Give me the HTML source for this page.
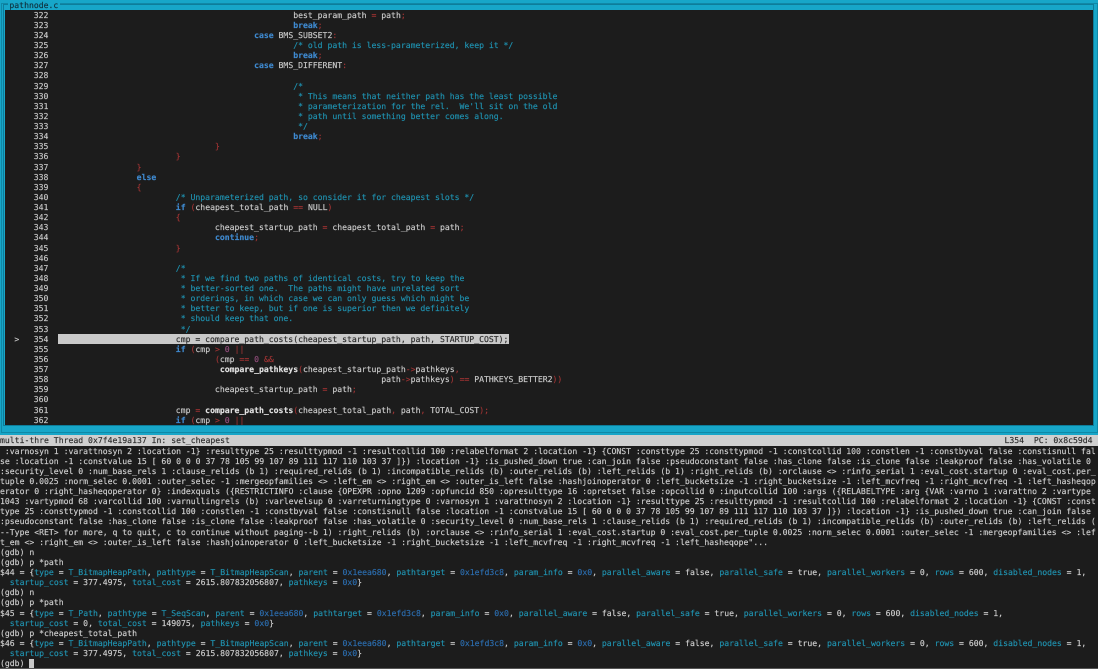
<!DOCTYPE html>
<html><head><meta charset="utf-8"><style>
html,body{margin:0;padding:0;width:1098px;height:669px;overflow:hidden;background:#1c1c1c}
#r{position:relative;width:1098px;height:669px;overflow:hidden;background:#1c1c1c;font-family:"DejaVu Sans Mono","Liberation Mono",monospace;font-size:8.14px;text-rendering:geometricPrecision}
.a{position:absolute}
pre{margin:0;font:inherit;line-height:10.125px;white-space:pre;position:absolute;filter:blur(.25px);color:#cdcdcd;-webkit-text-stroke:.14px currentColor}
.k{color:#3f8ad0;font-weight:bold}.c{color:#1f93b2}.p{color:#a03434}.n{color:#96507f}.b{font-weight:bold;color:#e2e2e2}
.f{color:#2094b2}.h{color:#2c6fb2}
</style></head><body><div id="r">
<div class="a" style="left:0;top:0;width:1098px;height:435px;background:#17a6c8"></div>
<div class="a" style="left:1px;top:3px;width:1095px;height:428px;border:1px solid #1088a6;box-sizing:content-box"></div>
<div class="a" style="left:3px;top:4px;width:1089px;height:420px;border:1px solid #0d7d9a"></div>
<div class="a" style="left:5px;top:9.5px;width:1087.5px;height:415.5px;background:#1c1c1c"></div>
<div class="a" style="left:8px;top:0;width:52px;height:9.5px;background:#17a6c8"></div>
<pre style="left:9.4px;top:-.2px;color:#10303c">pathnode.c</pre>
<div class="a" style="left:58.3px;top:333.5px;width:451px;height:10.5px;background:#c9c9c9"></div>
<pre style="left:14.4px;top:333.8px">&gt;</pre>
<pre style="left:33.7px;top:9.7px;color:#cbcbcb">322
323
324
325
326
327
328
329
330
331
332
333
334
335
336
337
338
339
340
341
342
343
344
345
346
347
348
349
350
351
352
353
354
355
356
357
358
359
360
361
362</pre>
<pre style="left:58.4px;top:9.7px">                                                best_param_path <span class="p">=</span> path<span class="p">;</span>
                                                <span class="k">break</span><span class="p">;</span>
                                        <span class="k">case</span> BMS_SUBSET2<span class="p">:</span>
                                                <span class="c">/* old path is less-parameterized, keep it */</span>
                                                <span class="k">break</span><span class="p">;</span>
                                        <span class="k">case</span> BMS_DIFFERENT<span class="p">:</span>

                                                <span class="c">/*</span>
                                                <span class="c"> * This means that neither path has the least possible</span>
                                                <span class="c"> * parameterization for the rel.  We'll sit on the old</span>
                                                <span class="c"> * path until something better comes along.</span>
                                                <span class="c"> */</span>
                                                <span class="k">break</span><span class="p">;</span>
                                <span class="p">}</span>
                        <span class="p">}</span>
                <span class="p">}</span>
                <span class="k">else</span>
                <span class="p">{</span>
                        <span class="c">/* Unparameterized path, so consider it for cheapest slots */</span>
                        <span class="k">if</span> <span class="p">(</span>cheapest_total_path <span class="p">==</span> NULL<span class="p">)</span>
                        <span class="p">{</span>
                                cheapest_startup_path <span class="p">=</span> cheapest_total_path <span class="p">=</span> path<span class="p">;</span>
                                <span class="k">continue</span><span class="p">;</span>
                        <span class="p">}</span>

                        <span class="c">/*</span>
                        <span class="c"> * If we find two paths of identical costs, try to keep the</span>
                        <span class="c"> * better-sorted one.  The paths might have unrelated sort</span>
                        <span class="c"> * orderings, in which case we can only guess which might be</span>
                        <span class="c"> * better to keep, but if one is superior then we definitely</span>
                        <span class="c"> * should keep that one.</span>
                        <span class="c"> */</span>
                        <span style="color:#262626">cmp = compare_path_costs(cheapest_startup_path, path, STARTUP_COST);</span>
                        <span class="k">if</span> <span class="p">(</span>cmp <span class="p">&gt;</span> <span class="n">0</span> <span class="p">||</span>
                                <span class="p">(</span>cmp <span class="p">==</span> <span class="n">0</span> <span class="p">&amp;&amp;</span>
                                 <span class="b">compare_pathkeys</span><span class="p">(</span>cheapest_startup_path<span class="p">-&gt;</span>pathkeys<span class="p">,</span>
                                                                  path<span class="p">-&gt;</span>pathkeys<span class="p">)</span> <span class="p">==</span> PATHKEYS_BETTER2<span class="p">))</span>
                                cheapest_startup_path <span class="p">=</span> path<span class="p">;</span>

                        cmp <span class="p">=</span> <span class="b">compare_path_costs</span><span class="p">(</span>cheapest_total_path<span class="p">,</span> path<span class="p">,</span> TOTAL_COST<span class="p">);</span>
                        <span class="k">if</span> <span class="p">(</span>cmp <span class="p">&gt;</span> <span class="n">0</span> <span class="p">||</span></pre>
<div class="a" style="left:0;top:435px;width:1098px;height:10.5px;background:#cfcfcf"></div>
<pre style="left:0;top:435.3px;color:#2a2a2a">multi-thre Thread 0x7f4e19a137 In: set_cheapest</pre>
<pre style="left:1004.5px;top:435.3px;color:#2a2a2a">L354  PC: 0x8c59d4</pre>
<pre style="left:0;top:445.6px;color:#d0d0d0"> :varnosyn 1 :varattnosyn 2 :location -1} :resulttype 25 :resulttypmod -1 :resultcollid 100 :relabelformat 2 :location -1} {CONST :consttype 25 :consttypmod -1 :constcollid 100 :constlen -1 :constbyval false :constisnull fal
se :location -1 :constvalue 15 [ 60 0 0 0 37 78 105 99 107 89 111 117 110 103 37 ]}) :location -1} :is_pushed_down true :can_join false :pseudoconstant false :has_clone false :is_clone false :leakproof false :has_volatile 0 
:security_level 0 :num_base_rels 1 :clause_relids (b 1) :required_relids (b 1) :incompatible_relids (b) :outer_relids (b) :left_relids (b 1) :right_relids (b) :orclause &lt;&gt; :rinfo_serial 1 :eval_cost.startup 0 :eval_cost.per_
tuple 0.0025 :norm_selec 0.0001 :outer_selec -1 :mergeopfamilies &lt;&gt; :left_em &lt;&gt; :right_em &lt;&gt; :outer_is_left false :hashjoinoperator 0 :left_bucketsize -1 :right_bucketsize -1 :left_mcvfreq -1 :right_mcvfreq -1 :left_hasheqop
erator 0 :right_hasheqoperator 0} :indexquals ({RESTRICTINFO :clause {OPEXPR :opno 1209 :opfuncid 850 :opresulttype 16 :opretset false :opcollid 0 :inputcollid 100 :args ({RELABELTYPE :arg {VAR :varno 1 :varattno 2 :vartype 
1043 :vartypmod 68 :varcollid 100 :varnullingrels (b) :varlevelsup 0 :varreturningtype 0 :varnosyn 1 :varattnosyn 2 :location -1} :resulttype 25 :resulttypmod -1 :resultcollid 100 :relabelformat 2 :location -1} {CONST :const
type 25 :consttypmod -1 :constcollid 100 :constlen -1 :constbyval false :constisnull false :location -1 :constvalue 15 [ 60 0 0 0 37 78 105 99 107 89 111 117 110 103 37 ]}) :location -1} :is_pushed_down true :can_join false 
:pseudoconstant false :has_clone false :is_clone false :leakproof false :has_volatile 0 :security_level 0 :num_base_rels 1 :clause_relids (b 1) :required_relids (b 1) :incompatible_relids (b) :outer_relids (b) :left_relids (
--Type &lt;RET&gt; for more, q to quit, c to continue without paging--b 1) :right_relids (b) :orclause &lt;&gt; :rinfo_serial 1 :eval_cost.startup 0 :eval_cost.per_tuple 0.0025 :norm_selec 0.0001 :outer_selec -1 :mergeopfamilies &lt;&gt; :lef
t_em &lt;&gt; :right_em &lt;&gt; :outer_is_left false :hashjoinoperator 0 :left_bucketsize -1 :right_bucketsize -1 :left_mcvfreq -1 :right_mcvfreq -1 :left_hasheqope"...
(gdb) n
(gdb) p *path
$44 = {<span class="f">type</span> = <span class="f">T_BitmapHeapPath</span>, <span class="f">pathtype</span> = <span class="f">T_BitmapHeapScan</span>, <span class="f">parent</span> = <span class="h">0x1eea680</span>, <span class="f">pathtarget</span> = <span class="h">0x1efd3c8</span>, <span class="f">param_info</span> = <span class="h">0x0</span>, <span class="f">parallel_aware</span> = false, <span class="f">parallel_safe</span> = true, <span class="f">parallel_workers</span> = 0, <span class="f">rows</span> = 600, <span class="f">disabled_nodes</span> = 1,
  <span class="f">startup_cost</span> = 377.4975, <span class="f">total_cost</span> = 2615.807832056807, <span class="f">pathkeys</span> = <span class="h">0x0</span>}
(gdb) n
(gdb) p *path
$45 = {<span class="f">type</span> = <span class="f">T_Path</span>, <span class="f">pathtype</span> = <span class="f">T_SeqScan</span>, <span class="f">parent</span> = <span class="h">0x1eea680</span>, <span class="f">pathtarget</span> = <span class="h">0x1efd3c8</span>, <span class="f">param_info</span> = <span class="h">0x0</span>, <span class="f">parallel_aware</span> = false, <span class="f">parallel_safe</span> = true, <span class="f">parallel_workers</span> = 0, <span class="f">rows</span> = 600, <span class="f">disabled_nodes</span> = 1,
  <span class="f">startup_cost</span> = 0, <span class="f">total_cost</span> = 149075, <span class="f">pathkeys</span> = <span class="h">0x0</span>}
(gdb) p *cheapest_total_path
$46 = {<span class="f">type</span> = <span class="f">T_BitmapHeapPath</span>, <span class="f">pathtype</span> = <span class="f">T_BitmapHeapScan</span>, <span class="f">parent</span> = <span class="h">0x1eea680</span>, <span class="f">pathtarget</span> = <span class="h">0x1efd3c8</span>, <span class="f">param_info</span> = <span class="h">0x0</span>, <span class="f">parallel_aware</span> = false, <span class="f">parallel_safe</span> = true, <span class="f">parallel_workers</span> = 0, <span class="f">rows</span> = 600, <span class="f">disabled_nodes</span> = 1,
  <span class="f">startup_cost</span> = 377.4975, <span class="f">total_cost</span> = 2615.807832056807, <span class="f">pathkeys</span> = <span class="h">0x0</span>}
(gdb) </pre>
<div class="a" style="left:29px;top:659px;width:5px;height:9px;background:#c8c8c8"></div>
<div class="a" style="left:0;top:668px;width:1098px;height:1px;background:#555"></div>
</div></body></html>
